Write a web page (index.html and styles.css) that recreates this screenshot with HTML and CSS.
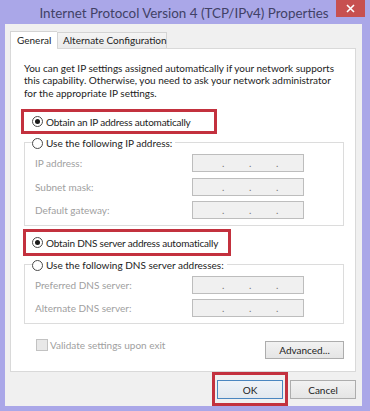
FILE: index.html
```html
<!DOCTYPE html>
<html>
<head>
<meta charset="utf-8">
<link rel="stylesheet" href="styles.css">
</head>
<body>
<div class="window">
  <div class="titlebar">
    <div class="title">Internet Protocol Version 4 (TCP/IPv4) Properties</div>
    <div class="close">
      <svg width="9" height="9" viewBox="0 0 9 9"><path d="M1 1 L8 8 M8 1 L1 8" stroke="#fff" stroke-width="1.6"/></svg>
    </div>
  </div>
  <div class="client">
    <div class="tabs">
      <div class="tab active">General</div>
      <div class="tab">Alternate Configuration</div>
    </div>
    <div class="panel">
      <p class="desc">You can get IP settings assigned automatically if your network supports<br>this capability. Otherwise, you need to ask your network administrator<br>for the appropriate IP settings.</p>

      <div class="mark mark-ip">
        <span class="radio on"></span><span>Obtain an IP address automatically</span>
      </div>

      <div class="group group-ip">
        <div class="legend"><span class="radio"></span><span>Use the following IP address:</span></div>
        <div class="rows">
          <span class="lbl">IP address:</span>
          <span class="ipbox"><span></span><i>.</i><span></span><i>.</i><span></span><i>.</i><span></span></span>
          <span class="lbl">Subnet mask:</span>
          <span class="ipbox"><span></span><i>.</i><span></span><i>.</i><span></span><i>.</i><span></span></span>
          <span class="lbl">Default gateway:</span>
          <span class="ipbox"><span></span><i>.</i><span></span><i>.</i><span></span><i>.</i><span></span></span>
        </div>
      </div>

      <div class="mark mark-dns">
        <span class="radio on"></span><span>Obtain DNS server address automatically</span>
      </div>

      <div class="group group-dns">
        <div class="legend"><span class="radio"></span><span>Use the following DNS server addresses:</span></div>
        <div class="rows">
          <span class="lbl">Preferred DNS server:</span>
          <span class="ipbox"><span></span><i>.</i><span></span><i>.</i><span></span><i>.</i><span></span></span>
          <span class="lbl">Alternate DNS server:</span>
          <span class="ipbox"><span></span><i>.</i><span></span><i>.</i><span></span><i>.</i><span></span></span>
        </div>
      </div>

      <div class="footer-row">
        <span class="checkbox"></span>
        <span class="dis">Validate settings upon exit</span>
        <span class="btn adv">Advanced...</span>
      </div>
    </div>
    <div class="buttons">
      <span class="btn ok">OK</span>
      <span class="btn cancel">Cancel</span>
    </div>
  </div>
</div>
</body>
</html>
```
FILE: styles.css
```css
* { box-sizing: border-box; }
html, body { margin: 0; padding: 0; }
body {
  background: #aaa7e8;
  width: 370px;
  height: 411px;
  overflow: hidden;
  font-family: Lato, "Noto Sans", sans-serif;
  font-size: 10px;
  color: #1c1c1c;
}
.window {
  width: 370px;
  height: 411px;
  padding: 0 8px 5px 5px;
  display: flex;
  flex-direction: column;
}
.titlebar {
  height: 24px;
  margin-right: -3px;
  display: flex;
  align-items: flex-start;
}
.title {
  flex: 1;
  text-align: center;
  padding-left: 27px;
  padding-top: 3px;
  font-size: 13.4px;
  color: #414166;
  white-space: nowrap;
  line-height: 20px;
}
.close {
  width: 29px;
  height: 17px;
  background: #c75050;
  display: flex;
  align-items: center;
  justify-content: center;
}
.close svg { display: block; }
.client {
  flex: 1;
  background: #f0f0f0;
  padding: 7px 6px 7px 5px;
  display: flex;
  flex-direction: column;
}
.tabs {
  display: flex;
  align-items: flex-end;
  height: 18px;
  margin-bottom: -1px;
  position: relative;
  z-index: 1;
}
.tab {
  height: 16px;
  padding: 0 5px;
  border: 1px solid #d4d4d4;
  border-bottom: none;
  background: linear-gradient(#f4f4f4, #ebebeb);
  line-height: 15px;
  white-space: nowrap;
}
.tab.active {
  height: 18px;
  width: 47px;
  padding: 0 6px;
  background: #fff;
  line-height: 17px;
  border-right: none;
}
.tab:not(.active) { width: 110px; margin-bottom: 1px; }
.panel {
  height: 324px;
  background: #fff;
  border: 1px solid #d9d9d9;
  display: flex;
  flex-direction: column;
  align-items: flex-start;
}
.desc {
  margin: 13px 0 0 13px;
  line-height: 12.4px;
  white-space: nowrap;
}
.mark {
  border: 3px solid #c3313e;
  display: flex;
  align-items: center;
  padding-left: 8px;
  gap: 3px;
  white-space: nowrap;
  letter-spacing: -0.2px;
}
.mark-ip { margin: 10px 0 0 10px; width: 196px; height: 25px; }
.mark-dns { margin: 3px 0 0 12px; width: 208px; height: 27px; padding-left: 6px; }
.radio {
  width: 11px;
  height: 11px;
  border-radius: 50%;
  border: 1px solid #4a4a4a;
  background: #fff;
  display: inline-flex;
  align-items: center;
  justify-content: center;
  flex: none;
}
.radio.on::after {
  content: "";
  width: 5px;
  height: 5px;
  border-radius: 50%;
  background: #1a1a1a;
}
.group {
  margin: 8px 0 0 13px;
  width: 320px;
  border: 1px solid #dcdcdc;
  padding: 0 0 6px 10px;
}
.group-dns { margin-top: 8px; }
.legend {
  display: flex;
  width: max-content;
  align-items: center;
  gap: 3px;
  height: 14px;
  margin: -7px 0 0 -3px;
  padding-right: 3px;
  background: #fff;
  white-space: nowrap;
}
.rows {
  display: grid;
  grid-template-columns: 157px 112px;
  grid-auto-rows: 18px;
  row-gap: 5.5px;
  margin-top: 4px;
  align-items: center;
}
.group-dns .rows { row-gap: 5px; }
.lbl { color: #a0a0a0; }
.ipbox {
  height: 18px;
  border: 1px solid #bdbdbd;
  background: #f0f0f0;
  display: flex;
  align-items: flex-end;
  padding: 0 0 3px 3px;
}
.ipbox span { width: 26px; }
.ipbox i {
  font-style: normal;
  width: 1px;
  color: #777;
  line-height: 10px;
  font-size: 10px;
}
.footer-row {
  align-self: stretch;
  display: flex;
  align-items: flex-start;
  margin: 15px 11px 0 25px;
}
.checkbox {
  width: 12px;
  height: 12px;
  border: 1px solid #c2c2c2;
  background: #e8e8e8;
  flex: none;
}
.dis {
  color: #a0a0a0;
  margin-left: 2px;
  line-height: 12px;
}
.btn {
  display: flex;
  align-items: center;
  justify-content: center;
  height: 19px;
  border: 1px solid #adadad;
  background: linear-gradient(#f2f2f2, #e5e5e5);
  color: #1c1c1c;
}
.adv {
  margin-left: auto;
  margin-top: 2px;
  width: 79px;
  height: 18px;
}
.buttons {
  display: flex;
  justify-content: flex-end;
  gap: 7px;
  margin-top: 8px;
}
.buttons .btn { width: 66px; }
.ok {
  position: relative;
  border-color: #4a86c0;
  background: linear-gradient(#eef3f8, #e2e8ef);
}
.ok::after {
  content: "";
  position: absolute;
  left: -6px;
  right: -6px;
  top: -9px;
  bottom: -8px;
  border: 3px solid #c3313e;
}
```
